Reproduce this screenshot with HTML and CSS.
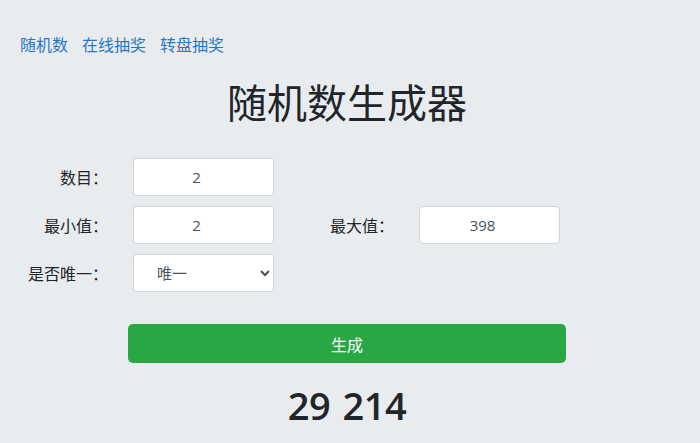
FILE: index.html
```html
<!DOCTYPE html>
<html lang="zh-CN">
<head>
    <meta charset="UTF-8">
    <meta name="viewport" content="width=device-width, initial-scale=1.0">
    <title>随机数生成器</title>
    <link rel="stylesheet" href="styles.css">
</head>
<body>
<div class="page">
    <nav class="nav">
        <a href="#">随机数</a>
        <a href="#">在线抽奖</a>
        <a href="#">转盘抽奖</a>
    </nav>

    <h1 class="title">随机数生成器</h1>

    <div class="form">
        <div class="row">
            <label for="count">数目：</label>
            <input type="text" id="count" value="2">
        </div>
        <div class="row">
            <label for="min">最小值：</label>
            <input type="text" id="min" value="2">
            <label for="max" class="second">最大值：</label>
            <input type="text" id="max" value="398">
        </div>
        <div class="row">
            <label for="unique">是否唯一：</label>
            <select id="unique">
                <option>唯一</option>
                <option>不唯一</option>
            </select>
        </div>
    </div>

    <button class="generate">生成</button>

    <div class="result">29 214</div>
</div>
</body>
</html>
```

FILE: styles.css
```css
body {
    margin: 0;
    background: #e9ecef;
    color: #212529;
    font-family: "Open Sans", "Noto Sans CJK SC", sans-serif;
    font-size: 16px;
}
.page {
    width: 694px;
    padding: 33px 0 0 0;
    box-sizing: border-box;
}
.nav {
    display: flex;
    gap: 14px;
    padding-left: 20px;
    line-height: 24px;
}
.nav a {
    color: #2878c8;
    text-decoration: none;
}
.title {
    margin: 22px 0 0 0;
    text-align: center;
    font-size: 40px;
    font-weight: 400;
    line-height: 48px;
}
.form {
    margin-top: 31px;
    padding-left: 20px;
    display: flex;
    flex-direction: column;
    gap: 10px;
}
.row {
    display: flex;
    align-items: center;
    height: 38px;
}
.row label {
    width: 88px;
    text-align: right;
    margin-right: 25px;
    color: #212529;
}
.row label.second {
    margin-left: 32px;
}
.row input,
.row select {
    width: 141px;
    height: 38px;
    box-sizing: border-box;
    background: #fff;
    border: 1px solid #ced4da;
    border-radius: 4px;
    font-family: inherit;
    font-size: 15px;
    color: #495057;
}
.row input {
    text-align: center;
    padding: 0 14px 0 0;
}
.row select {
    padding-left: 19px;
}
.generate {
    display: block;
    margin: 32px 0 0 128px;
    width: 438px;
    height: 39px;
    border: none;
    border-radius: 5px;
    background: #28a745;
    color: #fff;
    font-family: inherit;
    font-size: 16px;
}
.result {
    margin-top: 18px;
    text-align: center;
    font-size: 38px;
    font-weight: 600;
    line-height: 48px;
    letter-spacing: -0.5px;
    word-spacing: 3px;
}
```
